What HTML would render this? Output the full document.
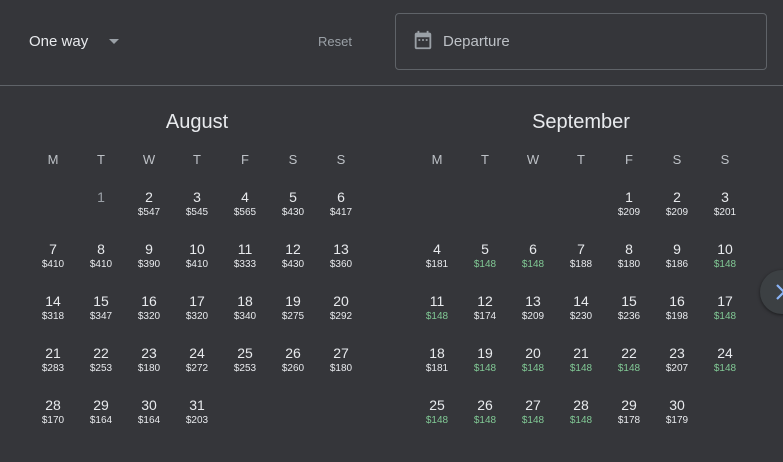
<!DOCTYPE html>
<html><head><style>
body{margin:0;width:783px;height:462px;background:#35363a;font-family:"Liberation Sans",sans-serif;color:#e8eaed;position:relative;overflow:hidden}
.a{position:absolute}
.c{position:absolute;width:48px;text-align:center;transform:translateX(-24px)}
.d{font-size:14px;line-height:16px}
.p{font-size:10px;line-height:12px;color:#e8eaed}
.g{color:#81c995}
.w{font-size:13px;color:#bdc1c6}
</style></head><body>
<div class="a" style="left:29px;top:33px;font-size:15px;color:#e8eaed">One way</div>
<div class="a" style="left:109px;top:39px;width:0;height:0;border-left:5px solid transparent;border-right:5px solid transparent;border-top:5px solid #9aa0a6"></div>
<div class="a" style="left:318px;top:34px;font-size:13px;color:#9aa0a6">Reset</div>
<div class="a" style="left:395px;top:13px;width:370px;height:55px;border:1px solid #5f6368;border-radius:4px"></div>
<svg class="a" style="left:412px;top:29px" width="22" height="22" viewBox="0 0 24 24"><path fill="#9aa0a6" d="M19 4h-1V2h-2v2H8V2H6v2H5c-1.1 0-2 .9-2 2v14c0 1.1.9 2 2 2h14c1.1 0 2-.9 2-2V6c0-1.1-.9-2-2-2zm0 16H5V9h14v11zM7 11h2v2H7zm4 0h2v2h-2zm4 0h2v2h-2z"/></svg>
<div class="a" style="left:443px;top:33px;font-size:15px;color:#bdc1c6">Departure</div>
<div class="a" style="left:0;top:85px;width:783px;height:1px;background:#5f6368"></div>
<div class="a" style="left:760px;top:270px;width:44px;height:44px;border-radius:50%;background:#3c4043;box-shadow:0 1px 3px rgba(0,0,0,.5)"></div>
<svg class="a" style="left:774px;top:283px" width="12" height="18" viewBox="0 0 12 18"><path d="M3 2l7 7-7 7" stroke="#8ab4f8" stroke-width="2.2" fill="none"/></svg>
<div id="cal"></div>
<script>
function m(x0,name,start,days,prices,green){
 let h='<div class="c" style="left:'+(x0+144)+'px;top:111px;width:200px;transform:translateX(-100px);font-size:20px">'+name+'</div>';
 'MTWTFSS'.split('').forEach((l,i)=>{h+='<div class="c w" style="left:'+(x0+i*48)+'px;top:152px">'+l+'</div>'});
 for(let d=1;d<=days;d++){let idx=start+d-1,col=idx%7,row=Math.floor(idx/7);
  let x=x0+col*48,y=189+row*52;
  let pr=prices[d-1];
  h+='<div class="c d" style="left:'+x+'px;top:'+y+'px'+(pr?'':';color:#9aa0a6')+'">'+d+'</div>';
  if(pr)h+='<div class="c p'+(green.includes(d)?' g':'')+'" style="left:'+x+'px;top:'+(y+18)+'px">$'+pr+'</div>';}
 return h;}
let aug=[0,547,545,565,430,417,410,410,390,410,333,430,360,318,347,320,320,340,275,292,283,253,180,272,253,260,180,170,164,164,203];
let sep=[209,209,201,181,148,148,188,180,186,148,148,174,209,230,236,198,148,181,148,148,148,148,207,148,148,148,148,148,178,179];
document.getElementById('cal').innerHTML=m(53,'August',1,31,aug,[])+m(437,'September',4,30,sep,[5,6,10,11,17,19,20,21,22,24,25,26,27,28]);
</script>
</body></html>
